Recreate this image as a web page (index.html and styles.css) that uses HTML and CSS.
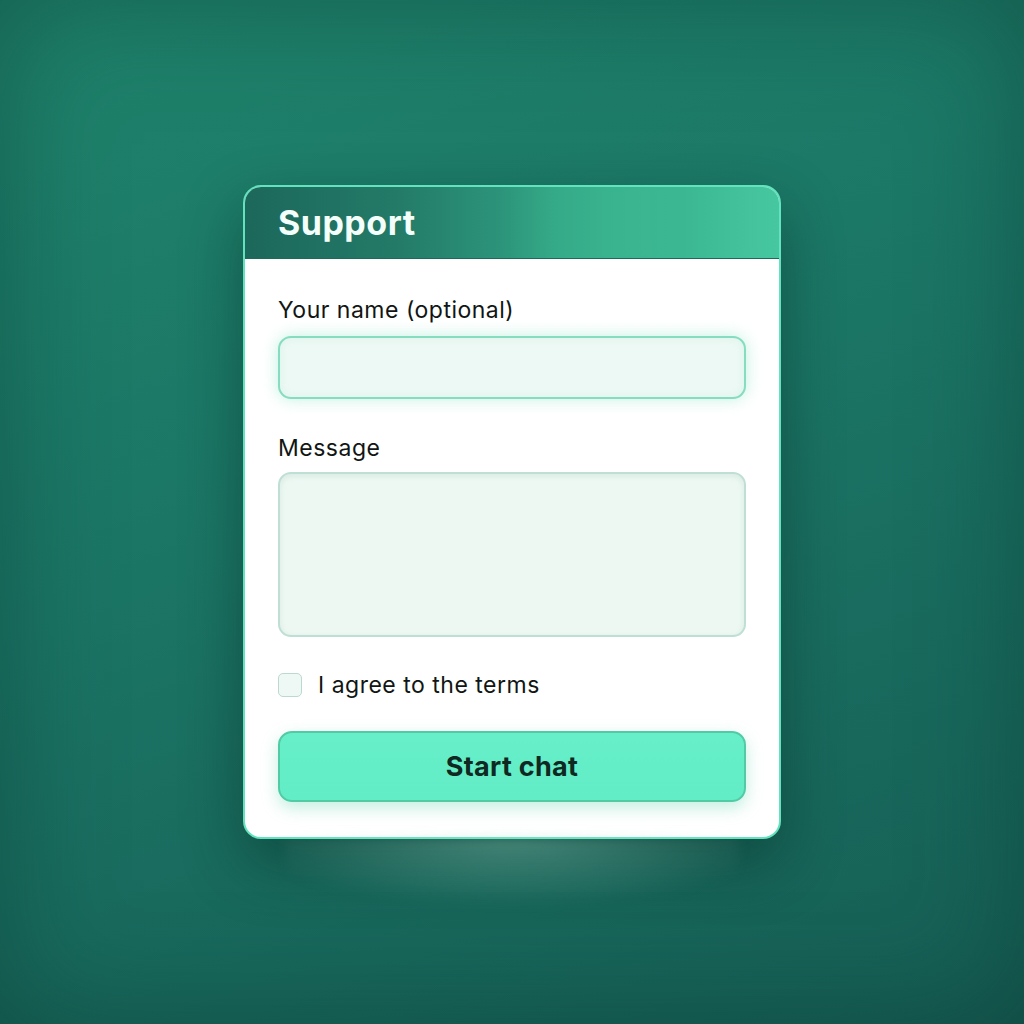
FILE: index.html
```html
<!DOCTYPE html>
<html lang="en">
<head>
<meta charset="utf-8">
<title>Support</title>
<link rel="stylesheet" href="styles.css">
</head>
<body>
<main class="stage">
  <section class="card">
    <header class="card-head">
      <h1 class="title">Support</h1>
    </header>
    <form class="card-body">
      <label class="label" for="name">Your name (optional)</label>
      <input class="input" id="name" type="text">
      <label class="label label-msg" for="msg">Message</label>
      <textarea class="textarea" id="msg"></textarea>
      <label class="check-row">
        <span class="checkbox"></span>
        <span class="check-text">I agree to the terms</span>
      </label>
      <button class="button" type="button">Start chat</button>
    </form>
  </section>
</main>
</body>
</html>
```
FILE: styles.css
```css
* { box-sizing: border-box; }
html, body { margin: 0; padding: 0; }
body {
  width: 1024px;
  height: 1024px;
  overflow: hidden;
  font-family: Inter, "Noto Sans", sans-serif;
  background: linear-gradient(160deg, #1f846c 0%, #1b7565 45%, #165e55 100%);
}
.stage {
  position: relative;
  width: 1024px;
  height: 1024px;
  display: flex;
  align-items: center;
  justify-content: center;
  box-shadow: inset 0 0 120px rgba(8, 50, 44, 0.45);
}
.card {
  position: relative;
  width: 538px;
  height: 654px;
  border: 2px solid #62e3bd;
  border-radius: 18px;
  background: #ffffff;
  box-shadow: 0 24px 60px rgba(6, 40, 34, 0.45);
  display: flex;
  flex-direction: column;
}
.card::after {
  content: "";
  position: absolute;
  left: 40px;
  right: 40px;
  top: 100%;
  height: 70px;
  background: radial-gradient(ellipse 60% 100% at 50% 0%, rgba(165, 228, 208, 0.36) 0%, rgba(165, 228, 208, 0.16) 55%, rgba(165, 228, 208, 0) 100%);
  filter: blur(6px);
  pointer-events: none;
}
.card-head {
  height: 72px;
  border-radius: 16px 16px 0 0;
  background: linear-gradient(90deg, #1c685b 0%, #237a67 28%, #2c947a 48%, #35aa88 58%, #3ab48f 70%, #3bb892 82%, #47c7a0 100%);
  display: flex;
  align-items: center;
  padding-left: 33px;
  border-bottom: 1px solid #1d6a5b;
}
.title {
  margin: 0;
  color: #f4fffb;
  font-size: 34px;
  font-weight: 700;
  letter-spacing: 0.5px;
}
.card-body {
  display: flex;
  flex-direction: column;
  padding: 37px 33px 0 33px;
}
.label {
  display: block;
  font-size: 23px;
  line-height: 28px;
  letter-spacing: 0.5px;
  color: #111614;
  margin-bottom: 12px;
}
.label-msg { margin-top: 35px; margin-bottom: 10px; }
.input {
  height: 63px;
  width: 100%;
  border: 2px solid #86dcc0;
  border-radius: 13px;
  background: #edf9f4;
  box-shadow: 0 0 16px rgba(100, 220, 180, 0.4), inset 0 0 8px rgba(120, 210, 180, 0.15);
  outline: none;
}
.textarea {
  height: 165px;
  width: 100%;
  resize: none;
  border: 2px solid #bfdfd4;
  border-radius: 13px;
  background: #edf8f3;
  box-shadow: inset 0 2px 6px rgba(120, 170, 150, 0.18);
  outline: none;
}
.check-row {
  margin-top: 36px;
  height: 24px;
  display: flex;
  align-items: center;
  gap: 16px;
}
.checkbox {
  width: 24px;
  height: 24px;
  border: 1.5px solid #bcd9cf;
  border-radius: 5px;
  background: #eef8f4;
}
.check-text {
  font-size: 23px;
  letter-spacing: 0.5px;
  color: #111614;
}
.button {
  margin-top: 34px;
  height: 71px;
  width: 100%;
  border: 2px solid #52cba5;
  border-radius: 14px;
  background: linear-gradient(180deg, #66efc8 0%, #62edc6 100%);
  box-shadow: 0 6px 16px rgba(80, 210, 170, 0.35);
  font-family: Inter, "Noto Sans", sans-serif;
  font-size: 27px;
  font-weight: 700;
  letter-spacing: 0.3px;
  color: #0f2922;
}
```
